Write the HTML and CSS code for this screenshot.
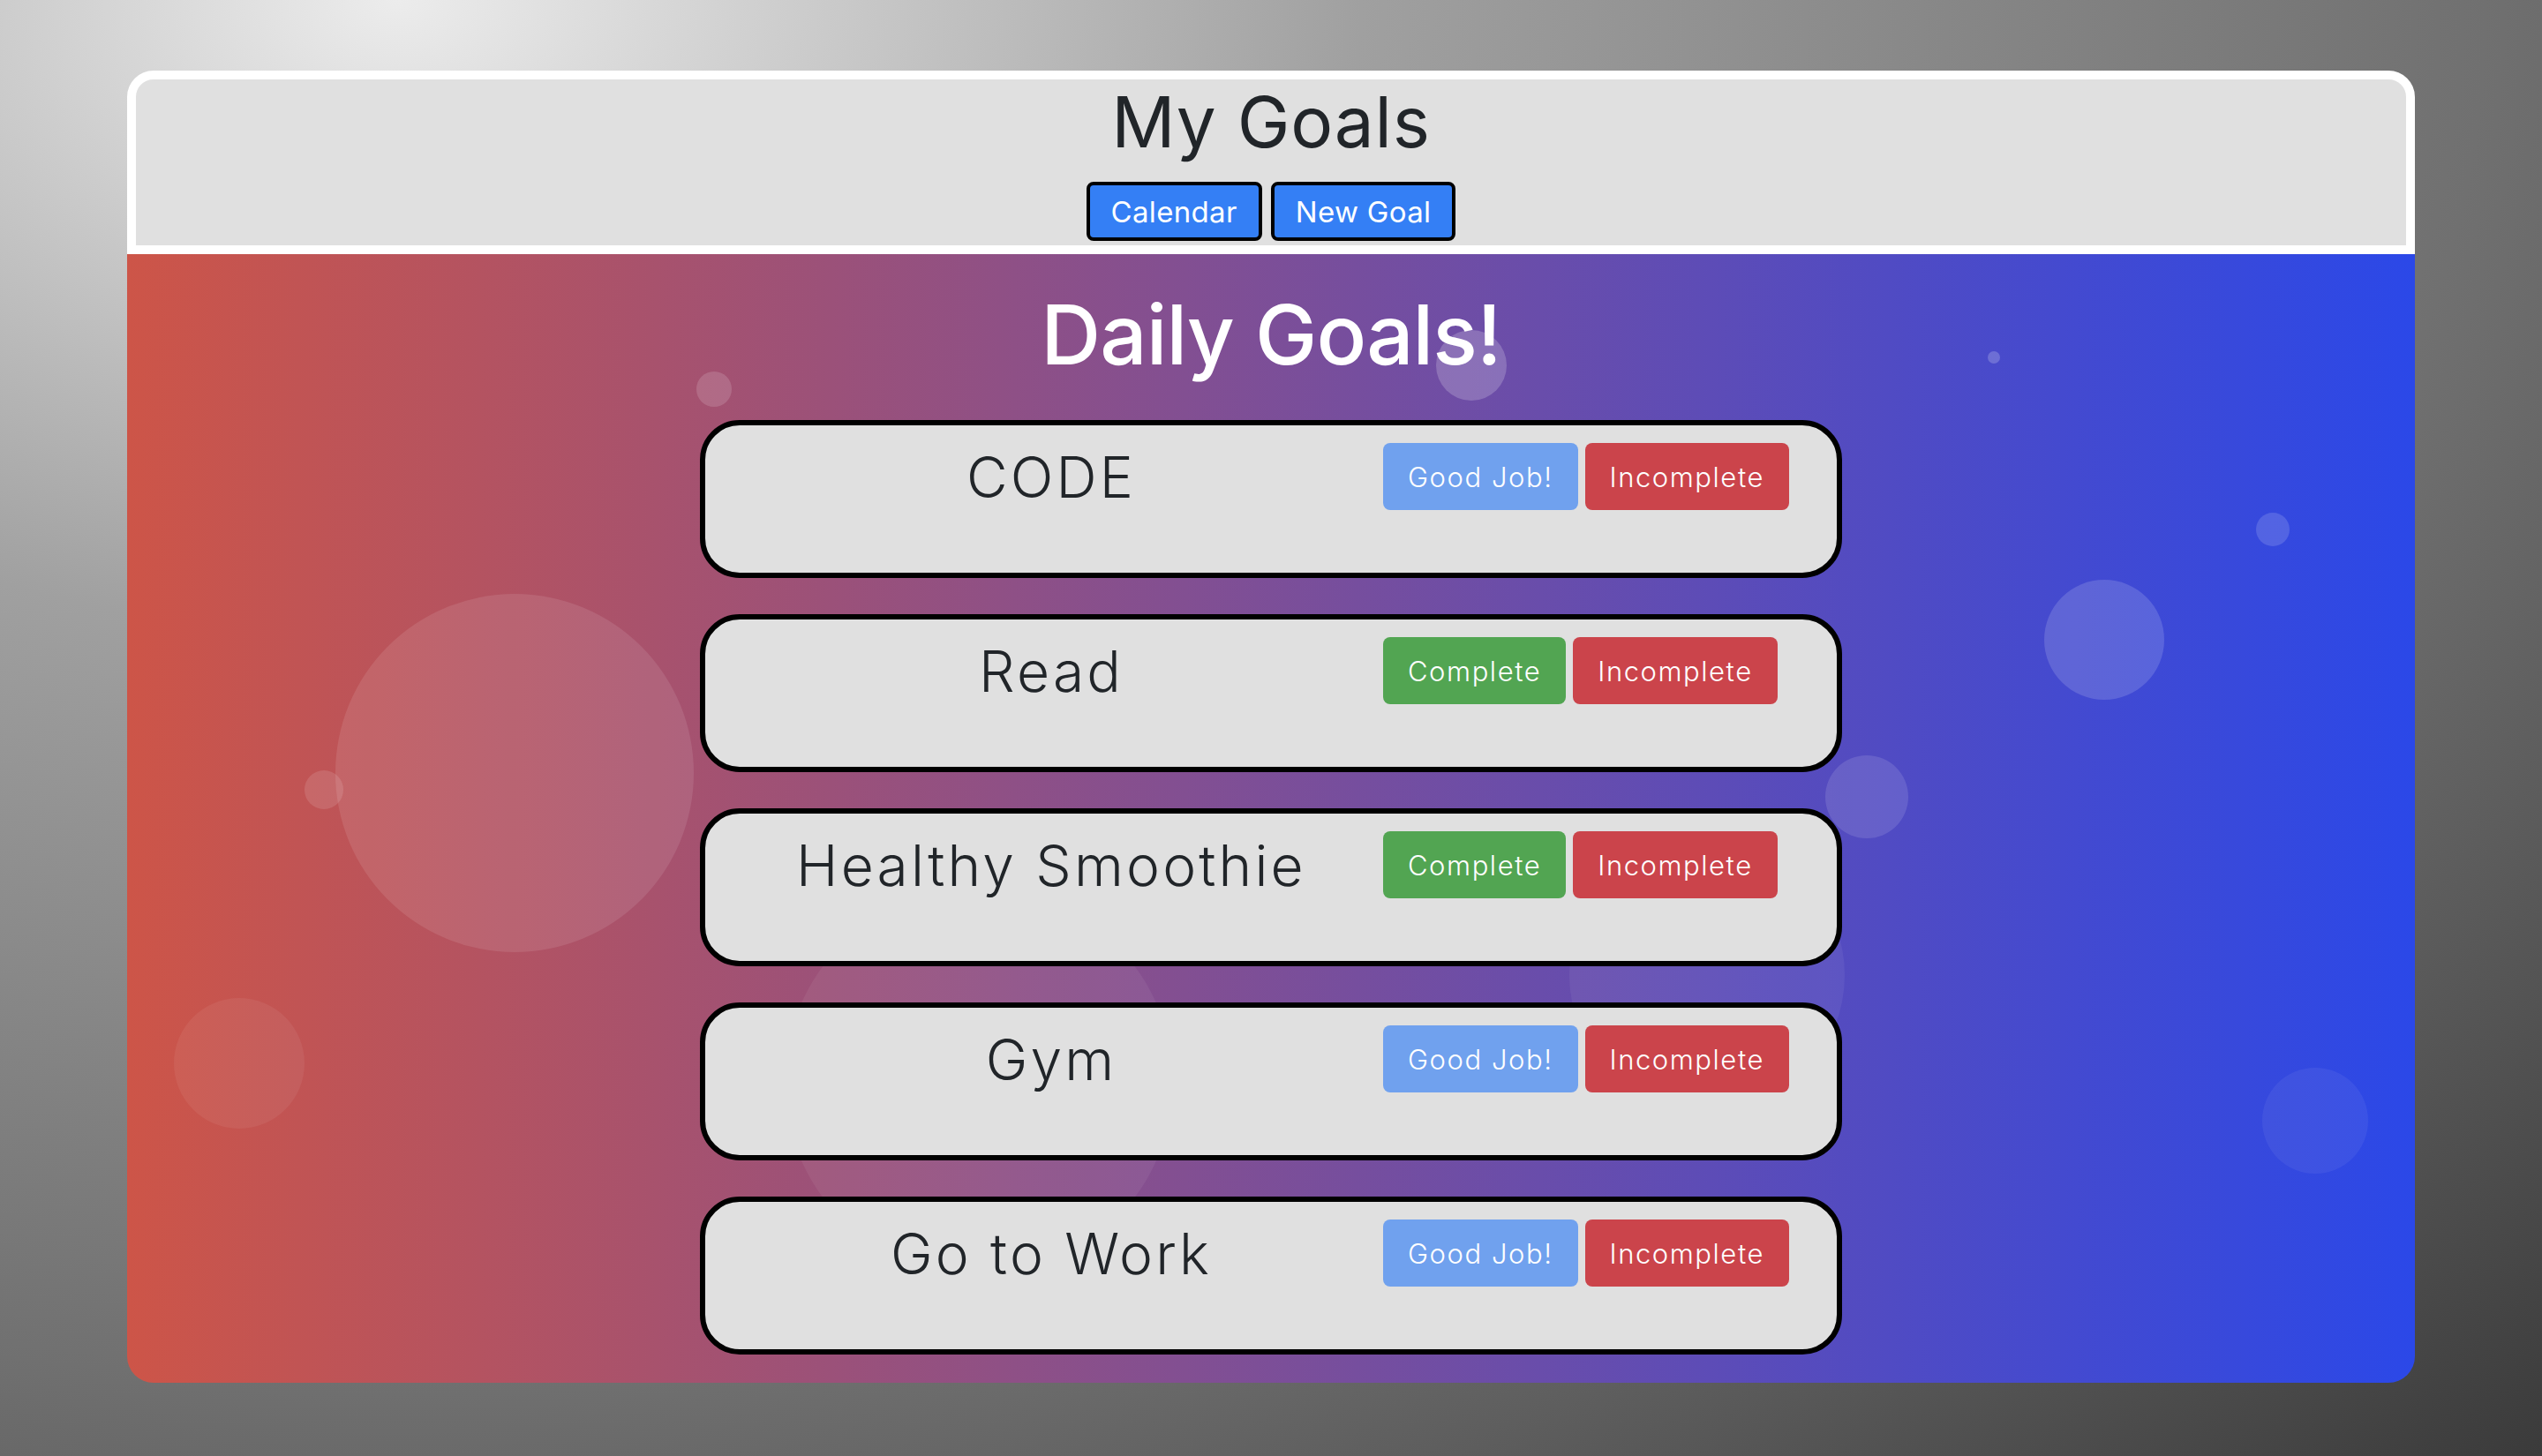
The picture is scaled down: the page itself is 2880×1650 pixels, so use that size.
FILE: index.html
```html
<!DOCTYPE html>
<html lang="en">
<head>
<meta charset="utf-8">
<title>My Goals</title>
<link rel="stylesheet" href="styles.css">
</head>
<body>
<div class="app">
  <header class="top">
    <h1 class="top-title">My Goals</h1>
    <nav class="top-nav">
      <button class="nav-btn">Calendar</button>
      <button class="nav-btn">New Goal</button>
    </nav>
  </header>
  <main class="board">
    <div class="bubble b1"></div>
    <div class="bubble b2"></div>
    <div class="bubble b3"></div>
    <div class="bubble b4"></div>
    <div class="bubble b5"></div>
    <div class="bubble b6"></div>
    <div class="bubble b7"></div>
    <div class="bubble b8"></div>
    <div class="bubble b9"></div>
    <div class="bubble b10"></div>
    <div class="bubble b11"></div>
    <div class="bubble b12"></div>
    <h2 class="board-title">Daily Goals!</h2>
    <ul class="goals">
      <li class="goal">
        <div class="goal-name">CODE</div>
        <div class="goal-actions">
          <button class="act act-done">Good Job!</button>
          <button class="act act-no">Incomplete</button>
        </div>
      </li>
      <li class="goal">
        <div class="goal-name">Read</div>
        <div class="goal-actions">
          <button class="act act-yes">Complete</button>
          <button class="act act-no">Incomplete</button>
        </div>
      </li>
      <li class="goal">
        <div class="goal-name">Healthy Smoothie</div>
        <div class="goal-actions">
          <button class="act act-yes">Complete</button>
          <button class="act act-no">Incomplete</button>
        </div>
      </li>
      <li class="goal">
        <div class="goal-name">Gym</div>
        <div class="goal-actions">
          <button class="act act-done">Good Job!</button>
          <button class="act act-no">Incomplete</button>
        </div>
      </li>
      <li class="goal">
        <div class="goal-name">Go to Work</div>
        <div class="goal-actions">
          <button class="act act-done">Good Job!</button>
          <button class="act act-no">Incomplete</button>
        </div>
      </li>
    </ul>
  </main>
</div>
</body>
</html>
```
FILE: styles.css
```css
html, body {
  margin: 0;
  padding: 0;
}

body {
  min-height: 1650px;
  font-family: "Inter", "Liberation Sans", sans-serif;
  color: #212529;
  background: radial-gradient(ellipse 3640px 2410px at 450px 0, #ececec 0%, #a0a0a0 30%, #707070 65%, #333333 100%);
  overflow: hidden;
}

.app {
  width: 90%;
  margin: 80px auto 0;
}

.top {
  background: #e0e0e0;
  border: 10px solid #ffffff;
  border-radius: 30px 30px 0 0;
  text-align: center;
  padding: 0 0 5px;
}

.top-title {
  margin: 0;
  font-size: 80px;
  line-height: 96px;
  font-weight: 400;
  letter-spacing: 0.01em;
  color: #212529;
}

.top-nav {
  margin-top: 20px;
  display: flex;
  justify-content: center;
  gap: 10px;
}

.nav-btn {
  height: 67px;
  padding: 0 24px;
  border: 4px solid #000;
  border-radius: 8px;
  background: #347ff5;
  color: #fff;
  font-family: inherit;
  font-size: 33px;
  font-weight: 400;
  letter-spacing: 0.01em;
}

.board {
  position: relative;
  overflow: hidden;
  background: linear-gradient(to right, #cd5548 0%, #2b48e8 100%);
  border-radius: 0 0 30px 30px;
  padding: 35px 0 32px;
}

.board-title {
  position: relative;
  z-index: 1;
  margin: 0;
  text-align: center;
  color: #ffffff;
  font-size: 94px;
  line-height: 113px;
  font-weight: 500;
  letter-spacing: -0.01em;
}

.goals {
  position: relative;
  z-index: 1;
  list-style: none;
  margin: 40px auto 0;
  padding: 0;
  width: 1294px;
  display: flex;
  flex-direction: column;
  gap: 41px;
}

.goal {
  box-sizing: border-box;
  height: 179px;
  background: #e0e0e0;
  border: 6px solid #000;
  border-radius: 45px;
  padding: 20px 0 0;
  display: grid;
  grid-template-columns: 768px 1fr;
  align-items: start;
}

.goal-name {
  padding-left: 16px;
  text-align: center;
  font-size: 64px;
  line-height: 77px;
  font-weight: 300;
  letter-spacing: 0.05em;
  color: #212529;
}

.goal-actions {
  display: flex;
  gap: 8px;
}

.act {
  height: 76px;
  padding: 0 28px;
  border: 0;
  border-radius: 8px;
  color: #fff;
  font-family: inherit;
  font-size: 31px;
  font-weight: 300;
  letter-spacing: 0.05em;
}

.act-done { background: #70a1ee; }
.act-yes { background: #52a552; }
.act-no { background: #cb444b; }

.bubble {
  position: absolute;
  border-radius: 50%;
  background: rgba(255, 255, 255, 0.1);
  z-index: 0;
}

.b1 { left: 236px; top: 385px; width: 406px; height: 406px; background: rgba(255,255,255,0.1); }
.b2 { left: 201px; top: 585px; width: 44px; height: 44px; background: rgba(255,255,255,0.12); }
.b3 { left: 53px; top: 843px; width: 148px; height: 148px; background: rgba(255,255,255,0.06); }
.b4 { left: 645px; top: 133px; width: 40px; height: 40px; background: rgba(255,255,255,0.15); }
.b5 { left: 1483px; top: 86px; width: 80px; height: 80px; background: rgba(255,255,255,0.2); }
.b6 { left: 2108px; top: 110px; width: 14px; height: 14px; background: rgba(255,255,255,0.2); }
.b7 { left: 2412px; top: 293px; width: 38px; height: 38px; background: rgba(255,255,255,0.15); }
.b8 { left: 2172px; top: 369px; width: 136px; height: 136px; background: rgba(255,255,255,0.15); }
.b9 { left: 1924px; top: 568px; width: 94px; height: 94px; background: rgba(255,255,255,0.12); }
.b10 { left: 2419px; top: 922px; width: 120px; height: 120px; background: rgba(255,255,255,0.06); }
.b11 { left: 1634px; top: 661px; width: 312px; height: 312px; background: rgba(255,255,255,0.06); }
.b12 { left: 745px; top: 718px; width: 440px; height: 440px; background: rgba(255,255,255,0.06); }
```
